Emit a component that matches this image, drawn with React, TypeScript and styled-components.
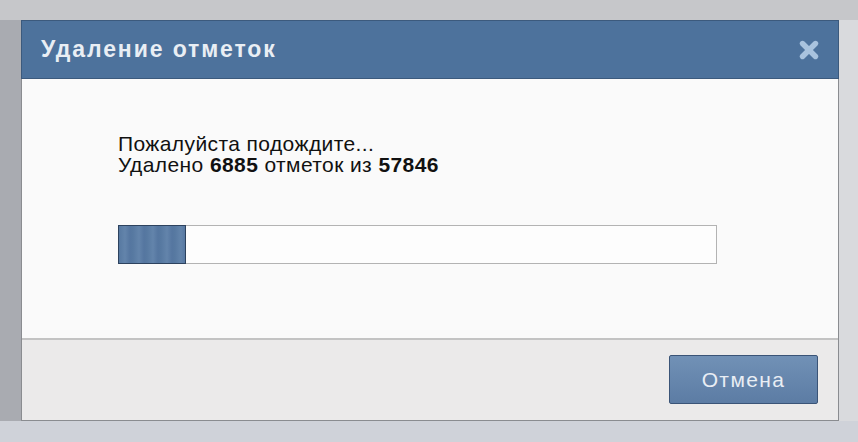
import React from 'react'
import styled, { createGlobalStyle } from 'styled-components'
import { X } from 'lucide-react'

const GlobalStyle = createGlobalStyle`
  html, body {
    margin: 0;
    padding: 0;
    width: 858px;
    height: 442px;
    overflow: hidden;
    font-family: "Liberation Sans", Arial, sans-serif;
  }
`

const Backdrop = styled.div`
  width: 858px;
  height: 442px;
  box-sizing: border-box;
  padding: 20px 19px 21px 21px;
  background:
    linear-gradient(to bottom, #c6c7ca 0, #c6c7ca 20px, transparent 20px, transparent 421px, #cfd2d9 421px),
    linear-gradient(to right, #a9abb1 0, #a9abb1 21px, #d9dadd 21px);
`

const Dialog = styled.div`
  height: 100%;
  display: flex;
  flex-direction: column;
  box-sizing: border-box;
  border: 1px solid #8a8c90;
  border-top: none;
  background: #fafafa;
`

const Header = styled.div`
  height: 57px;
  flex: none;
  display: flex;
  align-items: center;
  justify-content: space-between;
  padding: 0 16px 0 19px;
  background: #4d729c;
  border: 1px solid #3c5a7d;
  margin: 0 -1px;
`

const Title = styled.h1`
  margin: 0;
  font-size: 23px;
  font-weight: bold;
  color: #e9eef4;
  letter-spacing: 1.9px;
`

const Close = styled.div`
  display: flex;
  color: #a9c3de;
`

const Body = styled.div`
  flex: 1;
  padding: 54px 0 0 96px;
  background: #fafafa;
`

const Message = styled.div`
  font-size: 21px;
  line-height: 21px;
  letter-spacing: 0.4px;
  color: #111;
`

const Progress = styled.div`
  margin-top: 50px;
  width: 599px;
  height: 39px;
  box-sizing: border-box;
  border: 1px solid #b3b3b3;
  background: #fdfdfd;
  display: flex;
`

const Fill = styled.div`
  box-sizing: border-box;
  border: 1px solid #2d425e;
  margin: -1px 0 0 -1px;
  height: calc(100% + 2px);
  background: repeating-linear-gradient(
    to right,
    #5779a1 0,
    #6384ab 6px,
    #5576a0 11px,
    #5779a1 14px
  );
`

const Footer = styled.div`
  height: 82px;
  flex: none;
  box-sizing: border-box;
  border-top: 2px solid #c3c3c3;
  background: #ebeaea;
  display: flex;
  justify-content: flex-end;
  align-items: flex-start;
  padding: 15px 20px 0 0;
`

const Button = styled.button`
  width: 149px;
  height: 49px;
  border: 1px solid #3a5477;
  border-radius: 2px;
  background: linear-gradient(to bottom, #7191b6, #5c7ca4);
  color: #e9eef4;
  font-family: "Liberation Sans", Arial, sans-serif;
  font-size: 21px;
  letter-spacing: 1.4px;
  cursor: pointer;
`

export default function App() {
  const done = 6885
  const total = 57846
  const fillWidth = 68

  return (
    <>
      <GlobalStyle />
      <Backdrop>
        <Dialog>
          <Header>
            <Title>Удаление отметок</Title>
            <Close>
              <X size={26} strokeWidth={5} />
            </Close>
          </Header>
          <Body>
            <Message>Пожалуйста подождите...</Message>
            <Message>
              Удалено <b>{done}</b> отметок из <b>{total}</b>
            </Message>
            <Progress>
              <Fill style={{ width: fillWidth }} />
            </Progress>
          </Body>
          <Footer>
            <Button>Отмена</Button>
          </Footer>
        </Dialog>
      </Backdrop>
    </>
  )
}
